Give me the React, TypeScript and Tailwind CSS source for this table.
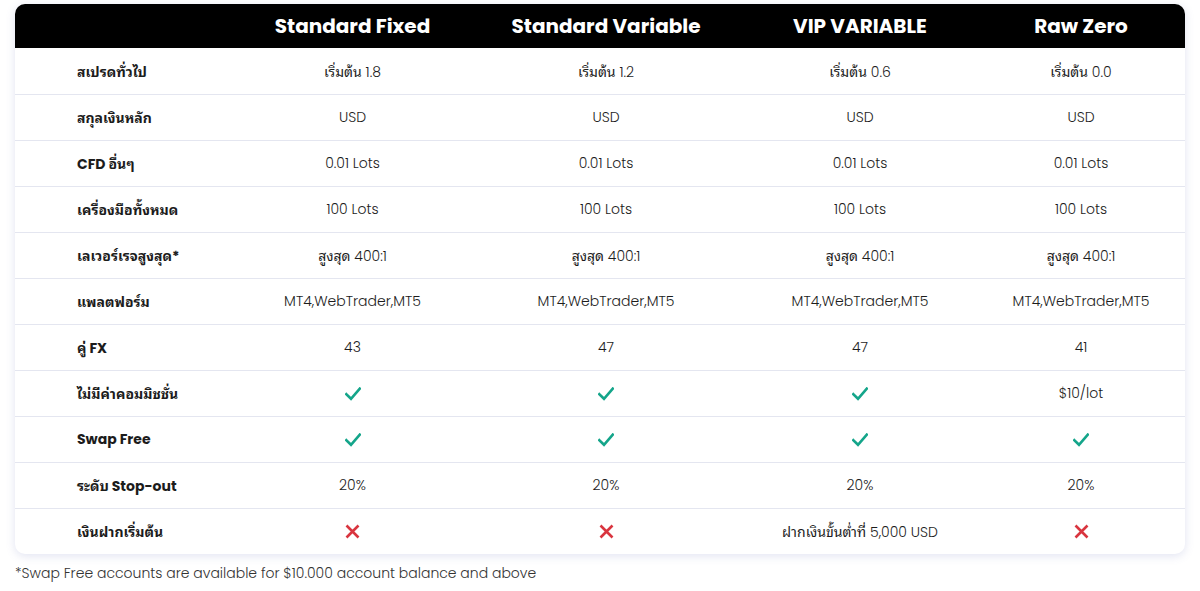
type Cell = string;

const plans = ["Standard Fixed", "Standard Variable", "VIP VARIABLE", "Raw Zero"];

const rows: { label: string; cells: Cell[] }[] = [
  { label: "สเปรดทั่วไป", cells: ["เริ่มต้น 1.8", "เริ่มต้น 1.2", "เริ่มต้น 0.6", "เริ่มต้น 0.0"] },
  { label: "สกุลเงินหลัก", cells: ["USD", "USD", "USD", "USD"] },
  { label: "CFD อื่นๆ", cells: ["0.01 Lots", "0.01 Lots", "0.01 Lots", "0.01 Lots"] },
  { label: "เครื่องมือทั้งหมด", cells: ["100 Lots", "100 Lots", "100 Lots", "100 Lots"] },
  { label: "เลเวอร์เรจสูงสุด*", cells: ["สูงสุด 400:1", "สูงสุด 400:1", "สูงสุด 400:1", "สูงสุด 400:1"] },
  {
    label: "แพลตฟอร์ม",
    cells: ["MT4,WebTrader,MT5", "MT4,WebTrader,MT5", "MT4,WebTrader,MT5", "MT4,WebTrader,MT5"],
  },
  { label: "คู่ FX", cells: ["43", "47", "47", "41"] },
  { label: "ไม่มีค่าคอมมิชชั่น", cells: ["yes", "yes", "yes", "$10/lot"] },
  { label: "Swap Free", cells: ["yes", "yes", "yes", "yes"] },
  { label: "ระดับ Stop-out", cells: ["20%", "20%", "20%", "20%"] },
  { label: "เงินฝากเริ่มต้น", cells: ["no", "no", "ฝากเงินขั้นต่ำที่ 5,000 USD", "no"] },
];

const grid = "grid grid-cols-[211px_253px_254px_254px_188px]";

// thai runs get a looped thai face, latin stays in poppins
function Mixed({ text, bold }: { text: string; bold?: boolean }) {
  const parts = text.split(/([\u0E00-\u0E7F]+)/).filter(Boolean);
  return (
    <>
      {parts.map((p, i) =>
        /[\u0E00-\u0E7F]/.test(p) ? (
          <span
            key={i}
            className={bold ? "font-bold" : "font-normal"}
            style={{ fontFamily: "Tahoma, 'Noto Sans Thai Looped', 'Noto Serif Thai', 'Garuda', 'Loma', 'Norasi', sans-serif" }}
          >
            {p}
          </span>
        ) : (
          <span key={i}>{p}</span>
        ),
      )}
    </>
  );
}

function CheckMark() {
  return (
    <svg width="16" height="14" viewBox="0 0 16 14" fill="none" className="text-[#14a58a]">
      <path d="M1.3 7.2 L6 11.8 L14.8 1.6" stroke="currentColor" strokeWidth="2.6" strokeLinecap="square" />
    </svg>
  );
}

function Cross() {
  return (
    <svg width="15" height="15" viewBox="0 0 15 15" fill="none" className="text-[#d9353f]">
      <path d="M1.5 1.5 L13.5 13.5 M13.5 1.5 L1.5 13.5" stroke="currentColor" strokeWidth="2.6" />
    </svg>
  );
}

function CellContent({ value }: { value: Cell }) {
  if (value === "yes") return <CheckMark />;
  if (value === "no") return <Cross />;
  return (
    <span>
      <Mixed text={value} />
    </span>
  );
}

export default function App() {
  return (
    <div
      className="min-h-screen bg-white px-[15px] pt-[4px] text-[#1c1c1c]"
      style={{ fontFamily: "Poppins, Inter, 'Noto Sans', sans-serif" }}
    >
      <div className="overflow-hidden rounded-[10px] bg-white shadow-[0_2px_10px_rgba(90,100,180,0.18)]">
        <div className={`${grid} h-[44px] items-center bg-black text-[20px] font-bold text-white`}>
          <div />
          {plans.map((p) => (
            <div key={p} className="text-center">
              {p}
            </div>
          ))}
        </div>
        {rows.map((r, i) => (
          <div
            key={r.label}
            className={`${grid} h-[46px] items-center text-[14px] ${i > 0 ? "border-t border-[#e4e6f0]" : ""}`}
          >
            <div className="pl-[62px] font-bold">
              <Mixed text={r.label} bold />
            </div>
            {r.cells.map((c, j) => (
              <div key={j} className="flex justify-center font-light">
                <CellContent value={c} />
              </div>
            ))}
          </div>
        ))}
      </div>
      <p className="mt-[9px] text-[14px] font-light text-[#333]">
        *Swap Free accounts are available for $10.000 account balance and above
      </p>
    </div>
  );
}
